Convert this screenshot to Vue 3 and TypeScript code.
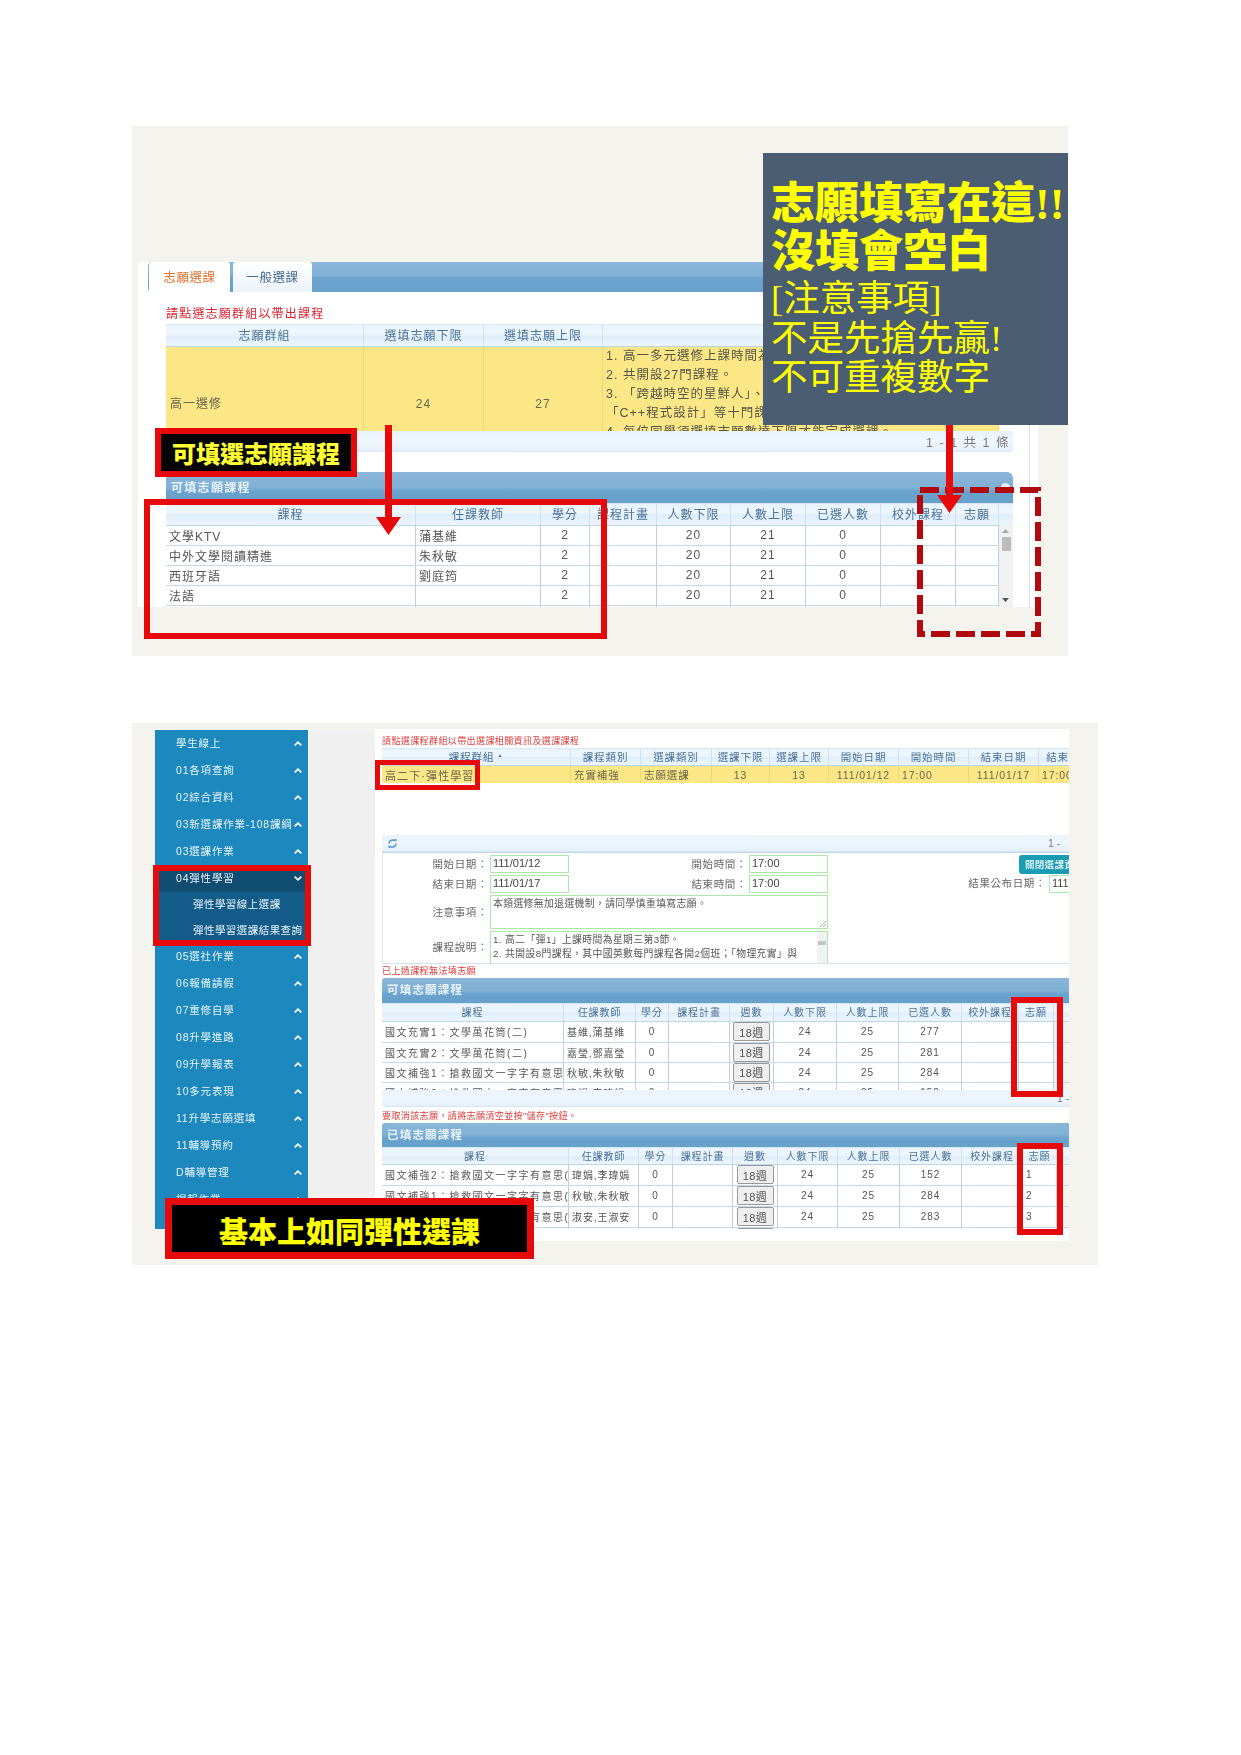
<script setup lang="ts">
type Row = string[]

const groupHead: Row = ['志願群組', '選填志願下限', '選填志願上限', '']
const noteLines: string[] = [
  '1. 高一多元選修上課時間為星期三第7、8節。',
  '2. 共開設27門課程。',
  '3. 「跨越時空的星鮮人」、',
  '「C++程式設計」等十門課程，',
  '4. 每位同學須選填志願數達下限才能完成選課。'
]
const openHead: Row = ['課程', '任課教師', '學分', '課程計畫', '人數下限', '人數上限', '已選人數', '校外課程', '志願', '']
const openRows: Row[] = [
  ['文學KTV', '蒲基維', '2', '', '20', '21', '0', '', '', ''],
  ['中外文學閱讀精進', '朱秋敏', '2', '', '20', '21', '0', '', '', ''],
  ['西班牙語', '劉庭筠', '2', '', '20', '21', '0', '', '', ''],
  ['法語', '', '2', '', '20', '21', '0', '', '', ''],
  ['', '', '', '', '', '', '', '', '', '']
]

const menuTop: string[] = ['學生線上', '01各項查詢', '02綜合資料', '03新選課作業-108課綱', '03選課作業']
const menuBottom: string[] = ['05選社作業', '06報備請假', '07重修自學', '08升學進路', '09升學報表', '10多元表現', '11升學志願選填', '11輔導預約', 'D輔導管理', '揭報作業']
const menuSub: string[] = ['彈性學習線上選課', '彈性學習選課結果查詢']

const courseHead: Row = ['課程類別', '選課類別', '選課下限', '選課上限', '開始日期', '開始時間', '結束日期', '結束時間']
const courseRow: Row = ['高二下·彈性學習', '充實補強', '志願選課', '13', '13', '111/01/12', '17:00', '111/01/17', '17:00']

const tableHead: Row = ['課程', '任課教師', '學分', '課程計畫', '週數', '人數下限', '人數上限', '已選人數', '校外課程', '志願', '']
const fillRows: Row[] = [
  ['國文充實1：文學萬花筒(二)', '基維,蒲基維', '0', '', '18週', '24', '25', '277', '', '', ''],
  ['國文充實2：文學萬花筒(二)', '嘉瑩,鄧嘉瑩', '0', '', '18週', '24', '25', '281', '', '', ''],
  ['國文補強1：搶救國文一字字有意思', '秋敏,朱秋敏', '0', '', '18週', '24', '25', '284', '', '', ''],
  ['國文補強2：搶救國文一字字有意思', '瑋娟,李瑋娟', '0', '', '18週', '24', '25', '152', '', '', '']
]
const doneRows: Row[] = [
  ['國文補強2：搶救國文一字字有意思(', '瑋娟,李瑋娟', '0', '', '18週', '24', '25', '152', '', '1', ''],
  ['國文補強1：搶救國文一字字有意思(', '秋敏,朱秋敏', '0', '', '18週', '24', '25', '284', '', '2', ''],
  ['國文補強3：搶救國文一字字有意思(II', '淑安,王淑安', '0', '', '18週', '24', '25', '283', '', '3', ''],
  ['', '', '', '', '18週', '', '', '', '', '', '']
]
</script>

<template>
  <main class="page">
    <!-- first pasted screenshot -->
    <section class="panel panel-one">
      <div class="sheet">
        <div class="sheet-inner">
          <div class="tabbar">
            <span class="tab tab-on">志願選課</span>
            <span class="tab">一般選課</span>
          </div>
          <p class="hint-big">請點選志願群組以帶出課程</p>
          <div class="grid-row head cols-group">
            <div v-for="(h, i) in groupHead" :key="i" class="cell">{{ h }}</div>
          </div>
          <div class="grid-row yellow cols-group tall">
            <div class="cell left bottom-text">高一選修</div>
            <div class="cell bottom-text">24</div>
            <div class="cell bottom-text">27</div>
            <div class="cell notes">
              <div v-for="n in noteLines" :key="n" class="note-line">{{ n }}</div>
            </div>
          </div>
          <div class="pager pager-big"><span>1 - 1 共 1 條</span></div>
          <div class="bar bar-big">
            <span>可填志願課程</span>
            <i class="bar-dot"></i>
          </div>
          <div class="table-clip">
            <div class="grid-row head cols-open">
              <div v-for="(h, i) in openHead" :key="i" class="cell">{{ h }}</div>
            </div>
            <div v-for="(r, ri) in openRows" :key="ri" class="grid-row body cols-open">
              <div v-for="(c, ci) in r" :key="ci" class="cell" :class="{ left: ci < 2, blank: ci === 9 }">{{ c }}</div>
            </div>
            <div class="scrollbar">
              <svg class="sb-up" width="7" height="4" viewBox="0 0 7 4"><path d="M0 4 3.500 0 7 4z" fill="#aaa" /></svg>
              <i class="sb-thumb"></i>
              <svg class="sb-down" width="7" height="4" viewBox="0 0 7 4"><path d="M0 0 3.500 4 7 0z" fill="#555" /></svg>
            </div>
          </div>
        </div>
      </div>

      <div class="callout">
        <div class="callout-big">志願填寫在這!!</div>
        <div class="callout-big">沒填會空白</div>
        <div class="callout-small first-small">[注意事項]</div>
        <div class="callout-small">不是先搶先贏!</div>
        <div class="callout-small">不可重複數字</div>
      </div>

      <div class="label-one">可填選志願課程</div>
      <div class="redbox box-courses"></div>
      <svg class="overlay" width="936" height="530" viewBox="0 0 936 530">
        <rect x="788" y="364" width="118" height="144" fill="none" stroke="#b10a0f" stroke-width="6" stroke-dasharray="19 6" />
        <path d="M253 299h7v92h9l-12.500 18L244 391h9z" fill="#e60a0a" />
        <path d="M814 299h7v70h9l-12.500 18L805 369h9z" fill="#e60a0a" />
      </svg>
    </section>

    <!-- second pasted screenshot -->
    <section class="panel panel-two">
      <div class="side-col">
        <div class="side-main">
          <nav class="menu">
            <div v-for="m in menuTop" :key="m" class="menu-row">
              <span>{{ m }}</span>
              <svg width="8" height="5" viewBox="0 0 8 5"><path d="M.7 4.300 4 1.200 7.300 4.300" fill="none" stroke="#fff" stroke-width="1.700" /></svg>
            </div>
            <div class="menu-row menu-open">
              <span>04彈性學習</span>
              <svg width="8" height="5" viewBox="0 0 8 5"><path d="M.7.7 4 3.800 7.300.7" fill="none" stroke="#fff" stroke-width="1.700" /></svg>
            </div>
            <div v-for="s in menuSub" :key="s" class="menu-row menu-sub"><span>{{ s }}</span></div>
            <div v-for="m in menuBottom" :key="m" class="menu-row">
              <span>{{ m }}</span>
              <svg width="8" height="5" viewBox="0 0 8 5"><path d="M.7 4.300 4 1.200 7.300 4.300" fill="none" stroke="#fff" stroke-width="1.700" /></svg>
            </div>
          </nav>
          <div class="side-gap"></div>
        </div>
      </div>

      <div class="content">
        <p class="hint first-hint">請點選課程群組以帶出選課相關資訊及選課課程</p>
        <div class="grid-row head small cols-course h18">
          <div class="cell">課程群組 <b class="sort">▲</b></div>
          <div v-for="h in courseHead" :key="h" class="cell">{{ h }}</div>
        </div>
        <div class="grid-row yellow small cols-course h17">
          <div v-for="(c, i) in courseRow" :key="i" class="cell" :class="{ left: i < 3 || i === 6 || i === 8, 'course-name': i === 0 }">{{ c }}</div>
        </div>
        <div class="course-empty"></div>
        <div class="pager pager-small">
          <svg class="refresh" width="9" height="9" viewBox="0 0 9 9"><path d="M1 4.500a3.500 3.500 0 0 1 6-2.400M8 4.500a3.500 3.500 0 0 1-6 2.400" fill="none" stroke="#4f93c4" stroke-width="1.500" /><path d="M6 0h2.500v3zM3 9H.5V6z" fill="#4f93c4" /></svg>
          <span class="pager-cut">1 -</span>
        </div>

        <div class="form">
          <div class="f-label">開始日期：</div>
          <div class="f-input">111/01/12</div>
          <div class="f-label">開始時間：</div>
          <div class="f-input">17:00</div>
          <div class="f-right"><span class="f-button">關閉選課資訊</span></div>

          <div class="f-label">結束日期：</div>
          <div class="f-input">111/01/17</div>
          <div class="f-label">結束時間：</div>
          <div class="f-input">17:00</div>
          <div class="f-right">
            <span class="f-label-inline">結果公布日期：</span>
            <span class="f-input f-input-cut">111</span>
          </div>

          <div class="f-label">注意事項：</div>
          <div class="f-input f-area">
            本類選修無加退選機制，請同學慎重填寫志願。
            <svg class="grip" width="6" height="6" viewBox="0 0 6 6"><path d="M0 6 6 0M3 6l3-3" stroke="#999" stroke-width=".8" /></svg>
          </div>
          <div class="f-empty"></div>

          <div class="f-label">課程說明：</div>
          <div class="f-input f-area f-desc">
            <div>1. 高二「彈1」上課時間為星期三第3節。</div>
            <div>2. 共開設8門課程，其中國英數每門課程各開2個班；「物理充實」與</div>
            <div class="mini-scroll"><i></i></div>
          </div>
          <div class="f-empty"></div>
        </div>

        <p class="hint second-hint">已上過課程無法填志願</p>
        <div class="bar bar-small h25"><span>可填志願課程</span></div>
        <div class="grid-row head small cols-fill h19">
          <div v-for="(h, i) in tableHead" :key="i" class="cell">{{ h }}</div>
        </div>
        <div class="clip-fill">
          <div v-for="(r, ri) in fillRows" :key="ri" class="grid-row body small cols-fill h20" :class="{ h21: ri === 0 }">
            <div v-for="(c, ci) in r" :key="ci" class="cell" :class="{ left: ci < 2, blank: ci === 10, wide: ci === 0 }">
              <span v-if="ci === 4" class="week">{{ c }}</span>
              <template v-else>{{ c }}</template>
            </div>
          </div>
        </div>
        <div class="pager pager-small pager-fill"><span class="pager-cut">1 -</span></div>

        <p class="hint third-hint">要取消該志願，請將志願清空並按"儲存"按鈕。</p>
        <div class="bar bar-small h24"><span>已填志願課程</span></div>
        <div class="grid-row head small cols-done h18">
          <div v-for="(h, i) in tableHead" :key="i" class="cell">{{ h }}</div>
        </div>
        <div class="clip-done">
          <div v-for="(r, ri) in doneRows" :key="ri" class="grid-row body small cols-done h21">
            <div v-for="(c, ci) in r" :key="ci" class="cell" :class="{ left: ci < 2 || ci === 9, blank: ci === 10, wide: ci === 0 }">
              <span v-if="ci === 4" class="week">{{ c }}</span>
              <template v-else>{{ c }}</template>
            </div>
          </div>
        </div>
      </div>

      <div class="redbox box-menu"></div>
      <div class="redbox box-group"></div>
      <div class="redbox box-fill"></div>
      <div class="redbox box-done"></div>
      <div class="label-two">基本上如同彈性選課</div>
    </section>
  </main>
</template>

<style>
html, body { background: #fff; }
</style>

<style scoped>
.page {
  width: 1241px;
  height: 1755px;
  box-sizing: border-box;
  padding: 126px 0 0 132px;
  background: #fff;
  overflow: hidden;
  font-family: "Liberation Sans", "Noto Sans CJK TC", sans-serif;
  color: #555;
}
.panel { position: relative; background: #f4f3ee; box-sizing: border-box; }
.panel-one { width: 936px; height: 530px; padding: 136px 30px 49px 6px; }
.panel-two { width: 966px; height: 542px; margin-top: 67px; padding-top: 6px; display: flex; align-items: flex-start; }

.sheet { width: 900px; height: 345px; background: #fff; overflow: hidden; filter: blur(.3px); }
.sheet-inner { width: 892px; height: 345px; box-sizing: border-box; padding-left: 28px; padding-right: 16px; border-right: 1px solid #d3e2ee; }

.tabbar {
  height: 30px;
  margin-left: -18px;
  margin-right: -1px;
  padding-left: 1px;
  display: flex;
  gap: 3px;
  border-radius: 4px 0 0 4px;
  background: linear-gradient(#8ab6d9 0, #7fb0d6 45%, #6aa2ce 55%, #69a1cd 100%);
}
.tab {
  width: 79px;
  display: flex;
  align-items: center;
  justify-content: center;
  padding-bottom: 2px;
  box-sizing: border-box;
  background: linear-gradient(#fff, #eaf3fb);
  font-size: 12.500px;
  letter-spacing: .6px;
  color: #46698c;
  border-radius: 3px 3px 0 0;
}
.tab-on { width: 81px; background: #fff; color: #e0702c; }
.hint-big { margin: 0; height: 32px; padding-top: 14px; box-sizing: border-box; line-height: 16px; font-size: 12px; letter-spacing: 1.200px; color: #dd2330; }

.grid-row { display: grid; overflow: hidden; box-sizing: border-box; }
.cols-group { grid-template-columns: 198px 120px 119px 396px; }
.cols-open { grid-template-columns: 250px 125px 49px 67px 74px 75px 75px 75px 43px 14px; }
.cols-course { grid-template-columns: 189px 70px 71px 58px 59px 70px 70px 70px 60px; width: 687px; }
.cols-fill { grid-template-columns: 182px 72px 33px 61px 44px 63px 62px 63px 57px 35px 15px; }
.cols-done { grid-template-columns: 187px 70px 34px 60px 45px 60px 62px 62px 61px 34px 12px; }

.cell { display: flex; align-items: center; justify-content: center; min-width: 0; white-space: nowrap; overflow: hidden; box-sizing: border-box; }
.cell.left { justify-content: flex-start; padding-left: 3px; }

.head {
  height: 23px;
  background: linear-gradient(#e8f3fc 0, #eff7fd 40%, #dfeefa 55%, #edf6fd 100%);
  border-top: 1px solid #d6e6f3;
  border-bottom: 1px solid #bcd5e9;
  font-size: 12px;
  letter-spacing: 1px;
  color: #4a7299;
}
.head .cell { border-right: 1px solid #cfe1f0; padding-bottom: 2px; }
.head .cell:last-child { border-right: 0; }

.body { height: 20px; background: #fff; font-size: 12px; letter-spacing: 1px; border-bottom: 1px solid #c3d9ea; }
.body .cell { border-right: 1px solid #b8d0e3; color: #555; padding-bottom: 1px; }
.body .cell.blank { border-right: 0; background: #f3f3f3; }

.yellow { background: #fbe785; font-size: 12px; letter-spacing: 1px; color: #6a6650; }
.yellow .cell { border-right: 1px solid #eed872; }
.course-name { letter-spacing: 1.100px; font-size: 11px; }
.tall { height: 84px; width: 833px; }
.bottom-text { align-items: flex-end; padding-bottom: 20px; }
.cell.left.bottom-text { padding-left: 4px; }
.notes { display: block; padding: 0 0 0 3px; color: #55554a; }
.note-line { height: 19px; line-height: 19px; font-size: 12.500px; letter-spacing: 1px; }

.pager {
  background: linear-gradient(#e9f3fb 0, #f0f7fd 50%, #e4f0fa 100%);
  border-bottom: 1px solid #d8e6f1;
  box-sizing: border-box;
  display: flex;
  align-items: center;
  color: #777;
  overflow: hidden;
  white-space: nowrap;
}
.pager-big { height: 21px; justify-content: flex-end; padding-right: 3px; font-size: 12.500px; letter-spacing: 1.500px; border-radius: 0 0 4px 0; }

.bar {
  background: linear-gradient(#8ab6d9 0, #7fb0d6 50%, #6aa2ce 64%, #68a0cc 100%);
  color: #e8f2fa;
  font-weight: 700;
  display: flex;
  align-items: center;
  position: relative;
  box-sizing: border-box;
  padding-bottom: 3px;
}
.bar-big { height: 31px; margin-top: 20px; padding-left: 5px; font-size: 12px; letter-spacing: 1.300px; border-radius: 6px 6px 0 0; }
.bar-dot { position: absolute; right: 3px; top: 11px; width: 9px; height: 9px; border-radius: 50%; background: #e9f2f9; }
.bar-small { padding-left: 5px; font-size: 11.500px; letter-spacing: 1.200px; border-radius: 3px 0 0 0; }

.table-clip { position: relative; }
.scrollbar { position: absolute; right: 0; top: 22px; width: 14px; height: 90px; background: #f1f1f1; }
.sb-up { position: absolute; left: 3px; top: 4px; }
.sb-down { position: absolute; left: 3px; top: 73px; }
.sb-thumb { position: absolute; left: 3px; top: 12px; width: 9px; height: 14px; background: #bcbcbc; }

.callout {
  position: absolute;
  left: 631px;
  top: 27px;
  width: 305px;
  height: 272px;
  box-sizing: border-box;
  padding: 28px 0 0 8px;
  background: #4a5d72;
  color: #ffff00;
  font-family: "Liberation Serif", "Noto Sans CJK TC", serif;
  overflow: hidden;
  white-space: nowrap;
}
.callout-big { font-size: 44px; line-height: 48px; font-weight: 900; letter-spacing: 0; }
.callout-small { font-size: 36.500px; line-height: 39.500px; font-weight: 400; }
.first-small { margin-top: 2px; }

.label-one {
  position: absolute;
  left: 23px;
  top: 302px;
  width: 202px;
  height: 49px;
  box-sizing: border-box;
  border: 6px solid #e60a0a;
  background: #050505;
  color: #ffff33;
  font-size: 24px;
  font-weight: 900;
  display: flex;
  align-items: center;
  justify-content: center;
}
.redbox { position: absolute; box-sizing: border-box; border: 6px solid #e60a0a; }
.box-courses { left: 12px; top: 373px; width: 463px; height: 140px; }
.overlay { position: absolute; left: 0; top: 0; pointer-events: none; }

/* sidebar */
.side-col { width: 232px; margin-left: 11px; padding-top: 1px; flex: none; }
.side-main { display: flex; padding-left: 12px; }
.menu { width: 153px; height: 499px; overflow: hidden; background: #1c88bd; flex: none; filter: blur(.3px); }
.side-gap { width: 67px; height: 511px; background: #f0f0f0; flex: none; }
.menu-row {
  height: 27px;
  padding: 0 6px 0 21px;
  display: flex;
  align-items: center;
  justify-content: space-between;
  color: #e8f4fa;
  font-size: 10.500px;
  letter-spacing: .8px;
  white-space: nowrap;
}
.menu-row span { padding-bottom: 2px; }
.menu-open { background: #114d73; }
.menu-sub { height: 25.500px; background: #135c8a; padding-left: 38px; padding-right: 0; letter-spacing: .45px; }

/* main */
.content { width: 694px; height: 512px; background: #fff; padding-left: 7px; box-sizing: border-box; overflow: hidden; flex: none; filter: blur(.3px); }
.hint { margin: 0; color: #e23a3a; font-size: 9px; letter-spacing: .4px; box-sizing: border-box; white-space: nowrap; }
.first-hint { height: 19px; padding-top: 7px; line-height: 11px; }
.second-hint { height: 14px; padding-top: 2px; line-height: 11px; }
.third-hint { height: 16px; padding-top: 4px; line-height: 11px; }
.small { font-size: 10.500px; letter-spacing: .9px; }
.h17 { height: 17px; }
.h18 { height: 18px; }
.h19 { height: 19px; }
.h20 { height: 20px; }
.h21 { height: 21px; }
.h24 { height: 24px; }
.h25 { height: 25px; }
.sort { font-size: 5px; font-weight: 400; margin-left: 3px; align-self: flex-start; margin-top: 3px; }
.course-empty { height: 52px; }
.pager-small { position: relative; height: 17px; padding-left: 6px; font-size: 10.500px; }
.pager-cut { position: absolute; left: 666px; }
.pager-fill .pager-cut { left: 675px; }
.refresh { display: block; }

.form {
  height: 112px;
  box-sizing: border-box;
  padding-top: 2px;
  display: grid;
  grid-template-columns: 107px 79px 180px 79px 242px;
  grid-template-rows: 20px 20px 36px 34px;
  border-left: 1px solid #d3e2ee;
  border-top: 1px solid #c2d6e6;
  border-bottom: 1px solid #d3e2ee;
  font-size: 10.500px;
  letter-spacing: .6px;
  overflow: hidden;
}
.f-label { display: flex; align-items: center; justify-content: flex-end; padding: 0 2px 4px 0; color: #666; white-space: nowrap; }
.f-input { height: 18px; box-sizing: border-box; border: 1.500px solid #abe9ab; padding-left: 2px; font-size: 11px; letter-spacing: 0; color: #444; line-height: 15px; background: #fff; white-space: nowrap; }
.f-area { grid-column: 2 / span 3; height: 34px; font-size: 9.800px; letter-spacing: .4px; line-height: 13.500px; position: relative; padding-top: 1px; overflow: hidden; color: #555; }
.f-desc { padding-top: 1px; }
.grip { position: absolute; right: 1px; bottom: 1px; }
.mini-scroll { position: absolute; right: 0; top: 0; width: 10px; height: 31px; background: #f2f2f2; }
.mini-scroll i { display: block; width: 8px; height: 4px; margin: 9px 1px 0; background: #c4c4c4; }
.f-right { display: flex; align-items: flex-start; justify-content: flex-end; gap: 3px; white-space: nowrap; overflow: hidden; }
.f-button {
  width: 51px;
  height: 19px;
  overflow: hidden;
  background: #1c9cb2;
  color: #d8f0f5;
  font-size: 9.500px;
  line-height: 19px;
  padding-left: 6px;
  box-sizing: border-box;
  border-radius: 3px 0 0 3px;
  letter-spacing: .3px;
  font-weight: 700;
}
.f-label-inline { line-height: 16px; color: #666; }
.f-input-cut { width: 21px; border-right: 0; overflow: hidden; }
.f-empty { height: 0; }

.cols-fill.small, .cols-done.small { font-size: 10px; }
.body.small { font-size: 10px; letter-spacing: .9px; }
.body.small .cell.wide { letter-spacing: 1.500px; }
.week {
  width: 37px;
  height: 19px;
  box-sizing: border-box;
  border: 1px solid #9a9a9a;
  border-radius: 2px;
  background: #efefef;
  display: flex;
  align-items: center;
  justify-content: center;
  font-size: 11px;
  letter-spacing: .4px;
  color: #555;
  flex: none;
}
.clip-fill { height: 68px; overflow: hidden; }
.pager-fill { height: 17px; border-radius: 0 0 0 4px; }
.clip-done { height: 64px; overflow: hidden; }

.box-menu { left: 21px; top: 142px; width: 158px; height: 81px; }
.box-group { left: 243px; top: 37px; width: 105px; height: 30px; border-width: 5px; }
.box-fill { left: 879px; top: 274px; width: 52px; height: 100px; }
.box-done { left: 885px; top: 420px; width: 46px; height: 92px; }
.label-two {
  position: absolute;
  left: 33px;
  top: 475px;
  width: 369px;
  height: 61px;
  box-sizing: border-box;
  border: 7px solid #e60a0a;
  background: #000;
  color: #ffff00;
  font-size: 29px;
  font-weight: 900;
  display: flex;
  align-items: center;
  justify-content: center;
  padding-top: 2px;
}
</style>
